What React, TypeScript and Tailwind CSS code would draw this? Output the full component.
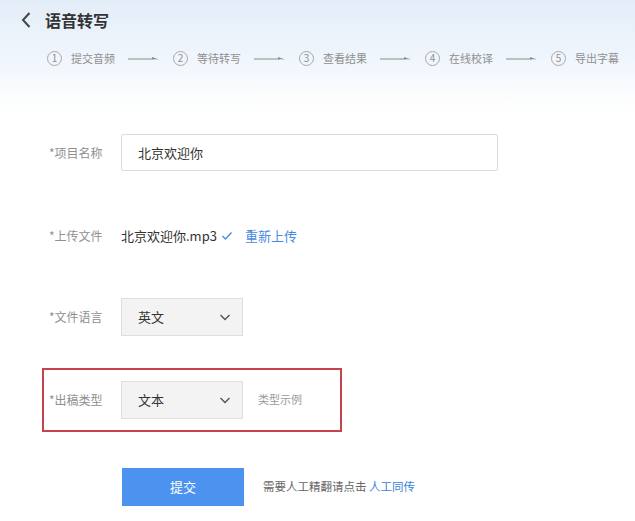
import React from "react";

const font = { fontFamily: '"Noto Sans CJK SC", "Noto Sans", sans-serif' };

const steps = ["提交音频", "等待转写", "查看结果", "在线校译", "导出字幕"];

const Arrow = () => (
  <span className="flex items-center justify-center w-[58px]">
    <svg width="32" height="6" viewBox="0 0 32 6">
      <line x1="0" y1="4" x2="26" y2="4" stroke="#8a8a8a" strokeWidth="1" />
      <path d="M24 4 L31 4.5 L24 2 Z" fill="#8a8a8a" />
    </svg>
  </span>
);

const Chevron = () => (
  <svg width="14" height="14" viewBox="0 0 14 14" fill="none">
    <path d="M2.5 5 L7 9.5 L11.5 5" stroke="#555" strokeWidth="1.4" />
  </svg>
);

const Select = ({ value }: { value: string }) => (
  <div className="flex items-center justify-between w-[122px] h-[38px] pl-4 pr-[10px] bg-[#f3f3f3] border border-[#dedede] text-[13px] text-[#333]">
    <span>{value}</span>
    <Chevron />
  </div>
);

const Label = ({ text }: { text: string }) => (
  <span className="w-[72px] text-[12px] text-[#8f8f8f]">*{text}</span>
);

export default function App() {
  return (
    <div className="w-[635px] h-[521px] bg-white overflow-hidden" style={font}>
      {/* header */}
      <div className="h-[110px] bg-gradient-to-b from-[#e3edf8] via-[#eff5fc] to-white pt-[9px]">
        <div className="flex items-center pl-[20px]">
          <svg width="12" height="18" viewBox="0 0 12 18" fill="none">
            <path d="M9.5 2 L3 9 L9.5 16" stroke="#444" strokeWidth="2" />
          </svg>
          <span className="ml-[13px] text-[16px] font-bold text-[#333] leading-[22px]">语音转写</span>
        </div>
        <div className="flex items-center pl-[47px] mt-[19px] text-[11px] text-[#8f8f8f]">
          {steps.map((s, i) => (
            <React.Fragment key={s}>
              <span className="flex items-center justify-center w-[15px] h-[15px] rounded-full border border-[#a8a8a8] text-[10px] leading-none">
                {i + 1}
              </span>
              <span className="ml-[9px]">{s}</span>
              {i < 4 && <Arrow />}
            </React.Fragment>
          ))}
        </div>
      </div>

      {/* form */}
      <div className="flex flex-col">
        <div className="flex items-center pl-[49px] mt-[24px]">
          <Label text="项目名称" />
          <div className="flex items-center w-[377px] h-[37px] pl-4 border border-[#dcdcdc] rounded-[2px] text-[13px] text-[#333]">
            北京欢迎你
          </div>
        </div>

        <div className="flex items-center pl-[49px] mt-[55px] text-[13px]">
          <Label text="上传文件" />
          <span className="text-[#333]">北京欢迎你.mp3</span>
          <svg width="12" height="10" viewBox="0 0 12 10" className="ml-[4px]" fill="none">
            <path d="M1.5 5 L4.5 8 L10.5 1.5" stroke="#4a8ae0" strokeWidth="1.3" />
          </svg>
          <span className="ml-[12px] text-[#4a8ae0]">重新上传</span>
        </div>

        <div className="flex items-center pl-[49px] mt-[52px]">
          <Label text="文件语言" />
          <Select value="英文" />
        </div>

        <div className="ml-[42px] mt-[32px] w-[300px] h-[64px] border-2 border-[#c6424c] flex items-center pl-[5px]">
          <Label text="出稿类型" />
          <Select value="文本" />
          <span className="ml-[15px] text-[11px] text-[#9a9a9a]">类型示例</span>
        </div>

        <div className="flex items-center pl-[122px] mt-[36px]">
          <button className="w-[122px] h-[38px] bg-[#4b93ee] text-white text-[13px]">提交</button>
          <span className="ml-[19px] text-[11.5px] text-[#666]">
            需要人工精翻请点击 <span className="text-[#3c7fd8]">人工同传</span>
          </span>
        </div>
      </div>
    </div>
  );
}
